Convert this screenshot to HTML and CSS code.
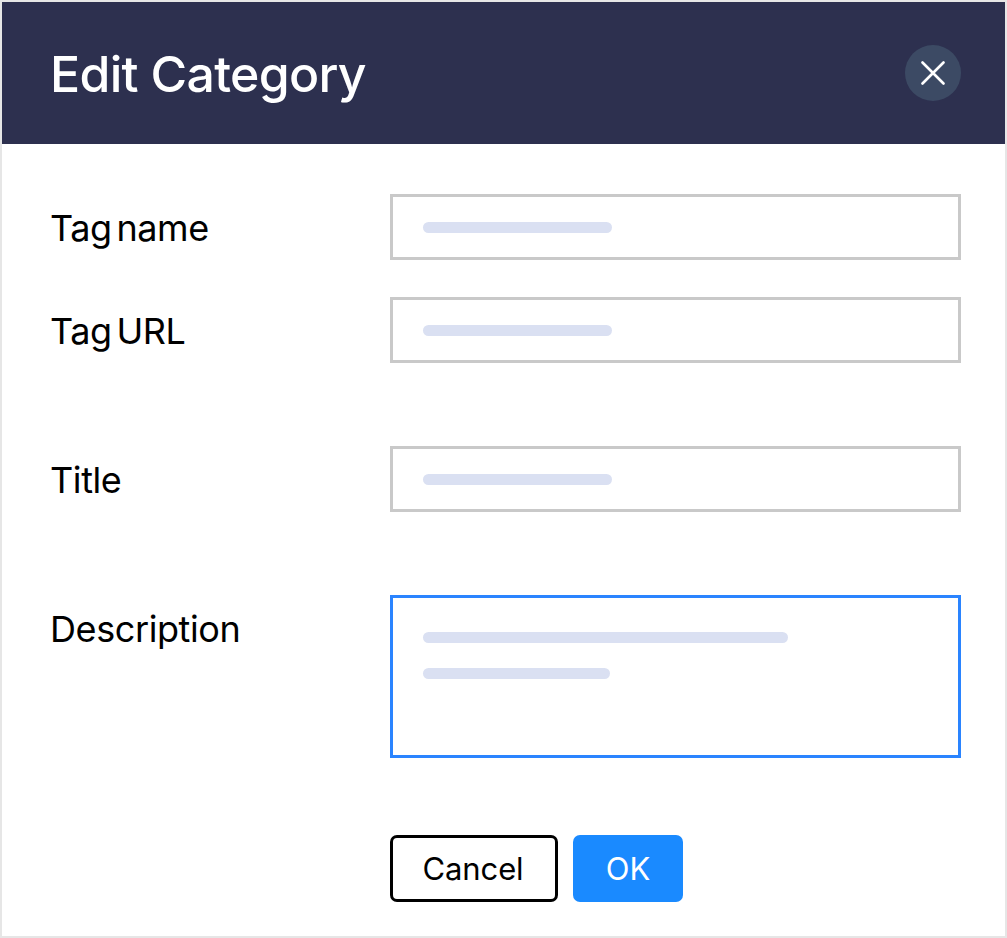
FILE: index.html
```html
<!DOCTYPE html>
<html lang="en">
<head>
<meta charset="utf-8">
<title>Edit Category</title>
<link rel="stylesheet" href="styles.css">
</head>
<body>
<div class="dialog">
  <header class="head">
    <h1 class="title">Edit Category</h1>
    <button class="close" aria-label="Close">
      <svg width="24" height="24" viewBox="0 0 24 24"><path d="M1.500 1.500L22.500 22.500M22.500 1.500L1.500 22.500" stroke="#fff" stroke-width="2.600" stroke-linecap="round" fill="none"/></svg>
    </button>
  </header>
  <form class="form">
    <div class="row near"><label class="label">Tag name</label><div class="field"><span class="line short"></span></div></div>
    <div class="row"><label class="label">Tag URL</label><div class="field"><span class="line short"></span></div></div>
    <div class="row"><label class="label">Title</label><div class="field"><span class="line short"></span></div></div>
    <div class="row"><label class="label">Description</label><div class="field area"><span class="line long"></span><span class="line mid"></span></div></div>
    <div class="actions">
      <button type="button" class="btn cancel">Cancel</button>
      <button type="button" class="btn ok">OK</button>
    </div>
  </form>
</div>
</body>
</html>
```
FILE: styles.css
```css
* { box-sizing: border-box; }
html, body { margin: 0; padding: 0; background: #fff; }
body { width: 1007px; height: 938px; font-family: "Inter", "Liberation Sans", sans-serif; overflow: hidden; }
.dialog { width: 1007px; height: 938px; border: 2px solid #e6e6e6; background: #fff; display: flex; flex-direction: column; }
.head { height: 142px; background: #2d304f; display: flex; align-items: center; justify-content: space-between; padding: 0 44px 0 48px; }
.title { margin: 2px 0 0; color: #fff; font-size: 50px; font-weight: 500; letter-spacing: -0.7px; line-height: 1; }
.close { width: 56px; height: 56px; border: 0; border-radius: 50%; background: #3c4a64; padding: 0; display: flex; align-items: center; justify-content: center; margin-top: -1px; }
.form { padding: 50px 44px 0 48px; display: flex; flex-direction: column; }
.row { display: flex; margin-bottom: 83px; }
.row.near { margin-bottom: 37px; }
.label { width: 340px; font-size: 36px; line-height: 40px; color: #000; padding-top: 14px; letter-spacing: -0.4px; word-spacing: -5px; }
.field { width: 572px; height: 66px; border: 3px solid #c9c9c9; padding: 0 0 0 30px; display: flex; align-items: center; background: #fff; }
.line { display: block; height: 11px; border-radius: 6px; background: #dae0f2; }
.short { width: 189px; }
.long { width: 365px; }
.mid { width: 187px; }
.area { height: 163px; border-color: #2a84ff; flex-direction: column; align-items: flex-start; gap: 25px; padding-top: 34px; }
.actions { display: flex; gap: 15px; margin-left: 340px; margin-top: -6px; }
.btn { height: 67px; font-family: inherit; font-size: 31px; border-radius: 7px; padding: 0; }
.cancel { width: 168px; background: #fff; border: 3.500px solid #000; color: #000; padding-right: 2px; letter-spacing: -0.1px; }
.ok { width: 110px; background: #1a8aff; border: 0; color: #fff; }
```
